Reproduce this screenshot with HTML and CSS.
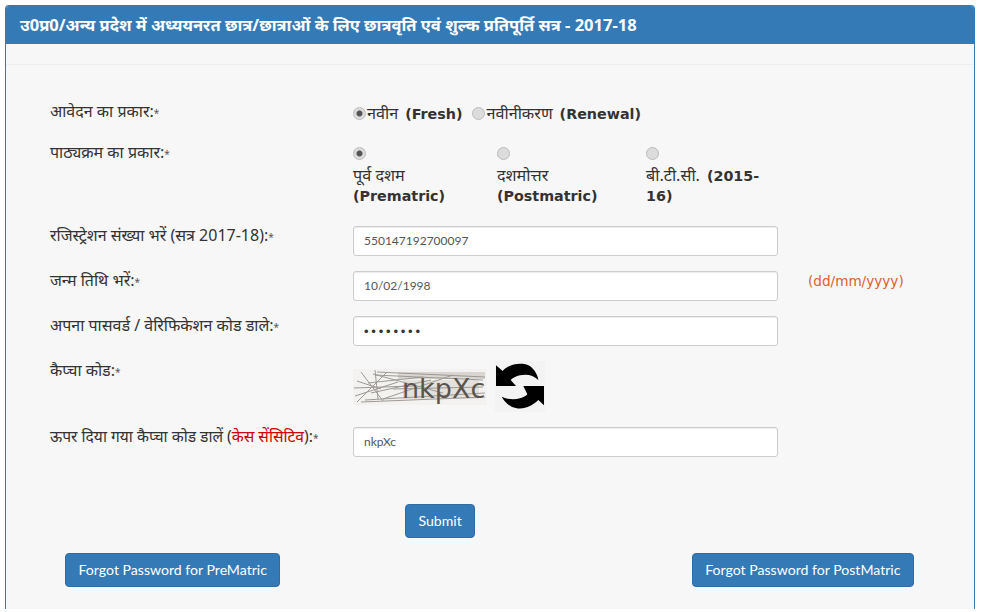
FILE: index.html
```html
<!DOCTYPE html>
<html lang="hi">
<head>
  <meta charset="UTF-8" />
  <meta name="viewport" content="width=device-width, initial-scale=1.0"/>
  <title>छात्रवृति एवं शुल्क प्रतिपूर्ति</title>
  <link rel="stylesheet" href="styles.css">
</head>

<body>
  <div class="panel">
    <div class="panel-heading">उ0प्र0/अन्य प्रदेश में अध्ययनरत छात्र/छात्राओं के लिए छात्रवृति एवं शुल्क प्रतिपूर्ति सत्र - 2017-18</div>
    <div class="panel-gap"></div>

    <form class="panel-body">
      <div class="row row-type">
        <label>आवेदन का प्रकार:<span class="star">*</span></label>
        <div class="radio-line">
          <input type="radio" name="apptype" checked><span class="opt-one"><span class="hi">नवीन</span> (Fresh)</span>
          <input type="radio" name="apptype"><span class="opt-two"><span class="hi">नवीनीकरण</span> (Renewal)</span>
        </div>
      </div>

      <div class="row row-course">
        <label>पाठ्यक्रम का प्रकार:<span class="star">*</span></label>
        <div class="radio-cols">
          <div class="radio-col col-pre"><input type="radio" name="course" checked><span><span class="hi">पूर्व दशम</span><br>(Prematric)</span></div>
          <div class="radio-col col-post"><input type="radio" name="course"><span><span class="hi">दशमोत्तर</span><br>(Postmatric)</span></div>
          <div class="radio-col col-btc"><input type="radio" name="course"><span><span class="hi">बी.टी.सी.</span> <span>(2015-</span><br>16)</span></div>
        </div>
      </div>

      <div class="row">
        <label>रजिस्ट्रेशन संख्या भरें (सत्र 2017-18):<span class="star">*</span></label>
        <input class="form-control" type="text" value="550147192700097">
      </div>

      <div class="row">
        <label>जन्म तिथि भरें:<span class="star">*</span></label>
        <input class="form-control" type="text" value="10/02/1998">
        <span class="hint">(dd/mm/yyyy)</span>
      </div>

      <div class="row">
        <label>अपना पासवर्ड / वेरिफिकेशन कोड डाले:<span class="star">*</span></label>
        <input class="form-control" type="password" value="12345678">
      </div>

      <div class="row row-captcha">
        <label>कैप्चा कोड:<span class="star">*</span></label>
        <div class="captcha">
          <svg class="captcha-img" width="134" height="36" viewBox="0 0 134 36">
            <rect width="134" height="36" fill="#f3f2f0"/>
            <rect x="45" y="3" width="87" height="7" fill="#d9d6d2"/>
            <rect x="50" y="11" width="76" height="19" fill="#d6d0ca" opacity=".5"/>
            <g stroke="#9d9a96" stroke-width="1" fill="none">
              <path d="M4 33 L34 3 M8 3 L30 32 M1 19 L60 17 M24 3 L132 8 M22 6 L130 11 M8 33 L132 28 M12 31 L132 24 M20 5 L90 24 M15 14 L70 8 M18 24 L78 11 M40 20 L130 18 M4 12 L28 20 M30 30 L100 6 M2 27 L45 13 M22 1 L25 30"/>
            </g>
            <text class="captcha-text" x="49" y="29">nkpXc</text>
          </svg>
          <svg class="refresh" width="50" height="51" viewBox="15 15 150 153">
            <rect x="15" y="15" width="150" height="153" fill="#f3f3f3"/>
            <path fill="#000" d="M18 28 L38 45 C55 25 90 18 115 28 C130 35 143 55 145 72 C130 57 110 53 90 58 C78 61 68 66 62 72 L78 90 L18 90 Z"/>
            <path fill="#000" d="M162 90 L162 148 L145 132 C125 152 95 165 65 152 C50 145 38 128 35 122 C50 130 72 132 90 127 C100 124 108 120 112 115 L100 90 Z"/>
          </svg>
        </div>
      </div>

      <div class="row row-last">
        <label>ऊपर दिया गया कैप्चा कोड डालें (<span class="red">केस सेंसिटिव</span>):<span class="star">*</span></label>
        <input class="form-control" type="text" value="nkpXc">
      </div>

      <div class="submit-row">
        <button class="btn" type="button">Submit</button>
      </div>

      <div class="forgot-row">
        <button class="btn" type="button">Forgot Password for PreMatric</button>
        <button class="btn" type="button">Forgot Password for PostMatric</button>
      </div>
    </form>
  </div>
</body>
</html>
```

FILE: styles.css
```css
html, body {
  margin: 0;
  height: 100%;
  background-color: #fff;
  overflow: hidden;
}

body {
  padding: 5px 9px 0 5px;
  box-sizing: border-box;
  font-family: "Lato", "Noto Sans", sans-serif;
  color: #333;
}

.panel {
  border: 1px solid #337ab7;
  border-bottom: none;
  border-radius: 4px 4px 0 0;
  background-color: #f7f7f7;
  height: 603px;
  overflow: hidden;
}

.panel-heading {
  background-color: #337ab7;
  color: #fff;
  height: 38px;
  line-height: 38px;
  padding-left: 14px;
  font-family: "Noto Sans", "Lato", sans-serif;
  font-size: 16.55px;
  font-weight: bold;
  white-space: nowrap;
}

.panel-gap {
  height: 20px;
  border-bottom: 1px solid #eee;
}

.panel-body {
  padding: 39px 0 0 44px;
}

.row {
  display: grid;
  grid-template-columns: 303px 425px auto;
  margin-bottom: 15px;
}

.row label {
  margin-top: -1px;
  font-family: "Noto Sans", "Lato", sans-serif;
  font-size: 16px;
  line-height: 20px;
  white-space: nowrap;
}

.row-type label,
.row-course label {
  margin-top: -3px;
}

.row-last label {
  font-size: 15.6px;
}

.star {
  font-size: 10px;
  color: #555;
}

.red {
  color: #c00;
}

.row-type {
  height: 18px;
  margin-bottom: 23px;
}

.row-course {
  height: 60px;
  margin-bottom: 21px;
}

.radio-line,
.radio-col {
  font-family: "DejaVu Sans", "Noto Sans", sans-serif;
  font-size: 14.3px;
  font-weight: bold;
  word-spacing: 2px;
  color: #333;
}

.hi {
  font-family: "Noto Sans", sans-serif;
  font-size: 16.2px;
  font-weight: normal;
  word-spacing: 0;
}

.radio-line {
  display: flex;
  align-items: center;
  height: 18px;
  white-space: nowrap;
}

input[type="radio"] {
  appearance: none;
  box-sizing: border-box;
  width: 13px;
  height: 13px;
  margin: 0;
  border: 1px solid #bbb;
  border-radius: 50%;
  background-color: #dcdcdc;
}

input[type="radio"]:checked {
  background: radial-gradient(circle, #555 0 2.5px, #dcdcdc 3.5px);
}

.opt-one {
  margin: 0 9px 0 1px;
}

.opt-two {
  margin-left: 2px;
}

.radio-cols {
  display: flex;
  grid-column: 2 / 4;
}

.radio-col {
  line-height: 20px;
}

.radio-col input {
  display: block;
  margin: 2px 0 5px 0;
}

.col-pre {
  width: 144px;
}

.col-post {
  width: 149px;
}

.col-btc {
  width: 135px;
}

.form-control {
  height: 30px;
  box-sizing: border-box;
  width: 425px;
  padding: 3px 10px 5px;
  border: 1px solid #ccc;
  border-radius: 3px;
  background-color: #fff;
  color: #555;
  font-family: "Lato", sans-serif;
  font-size: 12px;
  box-shadow: inset 0 1px 1px rgba(0, 0, 0, .075);
}

.form-control[type="password"] {
  padding: 4px 10px;
  color: #333;
  font-family: "Liberation Sans", sans-serif;
  font-size: 13px;
  letter-spacing: 2.8px;
}

.hint {
  margin-left: 30px;
  font-family: "DejaVu Sans", sans-serif;
  font-size: 13.6px;
  line-height: 21px;
  color: #d9622b;
}

.row-captcha {
  height: 51px;
}

.captcha {
  display: flex;
  align-items: flex-start;
  gap: 8px;
}

.captcha-img {
  margin-top: 8px;
}

.captcha-text {
  font-family: "DejaVu Sans", sans-serif;
  font-size: 27px;
  fill: #5a554f;
}

.submit-row {
  margin-top: 47px;
  padding-left: 355px;
}

.forgot-row {
  display: flex;
  justify-content: space-between;
  width: 849px;
  margin: 15px 0 0 15px;
}

.btn {
  height: 34px;
  padding: 0 12.5px 2px;
  border: 1px solid #2e6da4;
  border-radius: 4px;
  background-color: #337ab7;
  color: #fff;
  font-family: "Lato", sans-serif;
  font-size: 14.1px;
}
```
